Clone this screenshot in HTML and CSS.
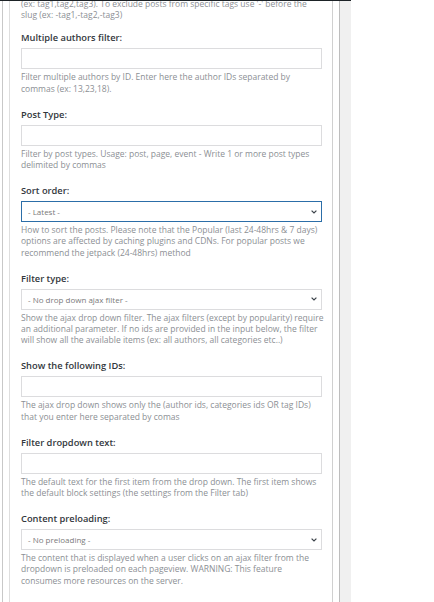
FILE: index.html
```html
<!DOCTYPE html>
<html>
<head>
<meta charset="utf-8">
<link rel="stylesheet" href="styles.css">
</head>
<body>
<div class="page">
  <div class="column">
    <div class="outer">
      <div class="inner">
        <div class="field first">
          <p class="desc">(ex: tag1,tag2,tag3). To exclude posts from specific tags use '-' before the slug (ex: -tag1,-tag2,-tag3)</p>
        </div>
        <div class="field second">
          <div class="label">Multiple authors filter:</div>
          <div class="input"></div>
          <p class="desc">Filter multiple authors by ID. Enter here the author IDs separated by commas (ex: 13,23,18).</p>
        </div>
        <div class="field">
          <div class="label">Post Type:</div>
          <div class="input"></div>
          <p class="desc">Filter by post types. Usage: post, page, event - Write 1 or more post types delimited by commas</p>
        </div>
        <div class="field">
          <div class="label">Sort order:</div>
          <div class="select focused"><span>- Latest -</span><svg class="chev" width="6" height="4" viewBox="0 0 6 4"><path d="M0.6 0.6 L3 3 L5.4 0.6" fill="none" stroke="#3c434a" stroke-width="1.2"/></svg></div>
          <p class="desc">How to sort the posts. Please note that the Popular (last 24-48hrs &amp; 7 days) options are affected by caching plugins and CDNs. For popular posts we recommend the jetpack (24-48hrs) method</p>
        </div>
        <div class="field">
          <div class="label">Filter type:</div>
          <div class="select"><span>- No drop down ajax filter -</span><svg class="chev" width="6" height="4" viewBox="0 0 6 4"><path d="M0.6 0.6 L3 3 L5.4 0.6" fill="none" stroke="#3c434a" stroke-width="1.2"/></svg></div>
          <p class="desc">Show the ajax drop down filter. The ajax filters (except by popularity) require an additional parameter. If no ids are provided in the input below, the filter will show all the available items (ex: all authors, all categories etc..)</p>
        </div>
        <div class="field">
          <div class="label">Show the following IDs:</div>
          <div class="input"></div>
          <p class="desc">The ajax drop down shows only the (author ids, categories ids OR tag IDs) that you enter here separated by comas</p>
        </div>
        <div class="field">
          <div class="label">Filter dropdown text:</div>
          <div class="input"></div>
          <p class="desc">The default text for the first item from the drop down. The first item shows the default block settings (the settings from the Filter tab)</p>
        </div>
        <div class="field">
          <div class="label">Content preloading:</div>
          <div class="select"><span>- No preloading -</span><svg class="chev" width="6" height="4" viewBox="0 0 6 4"><path d="M0.6 0.6 L3 3 L5.4 0.6" fill="none" stroke="#3c434a" stroke-width="1.2"/></svg></div>
          <p class="desc">The content that is displayed when a user clicks on an ajax filter from the dropdown is preloaded on each pageview. WARNING: This feature consumes more resources on the server.</p>
        </div>
      </div>
    </div>
  </div>
  <div class="strip"></div>
</div>
</body>
</html>
```
FILE: styles.css
```css
html, body {
  margin: 0;
  padding: 0;
  background: #ffffff;
  height: 100%;
  overflow: hidden;
}
body {
  font-family: "Open Sans", "Noto Sans", sans-serif;
}
.page {
  display: flex;
  width: 351px;
  height: 602px;
  border-top: 1px solid #1d2327;
  box-sizing: border-box;
}
.column {
  width: 340px;
  padding-left: 2px;
  box-sizing: border-box;
  background: #ffffff;
  display: flex;
}
.strip {
  width: 11px;
  background: #f0f0f0;
}
.outer {
  flex: 1;
  border-left: 1px solid #c8c8c8;
  border-right: 1px solid #bdbdbd;
  padding: 0 6px;
  display: flex;
}
.inner {
  flex: 1;
  border-left: 1px solid #dedede;
  border-right: 1px solid #d0d0d0;
  padding: 0 10px 0 11px;
  overflow: hidden;
}
.field {
  margin-top: 13px;
}
.field.first {
  margin-top: -5px;
}
.field.second {
  margin-top: 10px;
}
.label {
  font-size: 9.3px;
  font-weight: 600;
  line-height: 16px;
  color: #32373c;
  margin-bottom: 2px;
}
.input, .select {
  height: 21px;
  box-sizing: border-box;
  border: 1px solid #dcdcde;
  background: #fff;
}
.select {
  display: flex;
  align-items: center;
  justify-content: space-between;
  padding: 0 4px 0 6px;
  font-size: 8px;
  color: #7a7a7a;
}
.select.focused {
  border-color: #2c6ea8;
}
.chev {
  display: block;
}
.desc {
  margin: 2px -2px 0 0;
  font-size: 8.5px;
  line-height: 11.2px;
  color: #8c8f94;
}
```
